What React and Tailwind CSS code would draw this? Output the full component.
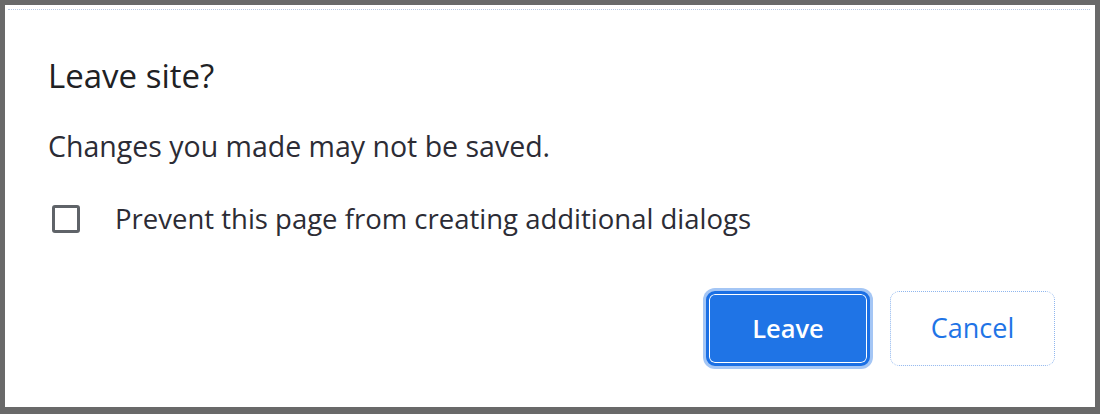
export default function App() {
  return (
    <div className="w-[1100px] h-[414px] bg-[#696969] pt-[5px] pl-[5px] pr-[5px] pb-[7px]">
      <div
        className="h-full bg-white flex flex-col text-[#202124]"
        style={{ fontFamily: '"Open Sans", "Noto Sans", sans-serif' }}
      >
        <div className="mt-[4px] ml-[3px] mr-[5px] border-t border-dotted border-[#b7c9e2]" />
        <div className="flex-1 flex flex-col pl-[43px] pr-[40px]">
          <h1 className="text-[33px] leading-none mt-[49px]">Leave site?</h1>
          <p className="text-[28.5px] leading-none mt-[40px] text-[#2c2c35]">Changes you made may not be saved.</p>
          <label className="flex items-center mt-[44px]">
            <span className="w-[28px] h-[28px] ml-[4px] shrink-0 border-[3px] border-[#5f6368] rounded-[3px]" />
            <span className="ml-[35px] text-[27.5px] leading-none text-[#2c2c35]">
              Prevent this page from creating additional dialogs
            </span>
          </label>
          <div className="flex justify-end gap-[20px] mt-auto mb-[41px]">
            <button className="w-[164px] h-[75px] rounded-[9px] bg-[#1f74e6] border-[3px] border-[#1a6fe4] shadow-[inset_0_0_0_1px_#ffffff,0_0_0_3px_#a4c6f5] text-white text-[25.5px] font-semibold">
              Leave
            </button>
            <button className="w-[165px] h-[75px] rounded-[9px] border border-dotted border-[#8fb6ee] text-[#1f74e6] text-[27px]">
              Cancel
            </button>
          </div>
        </div>
      </div>
    </div>
  );
}
